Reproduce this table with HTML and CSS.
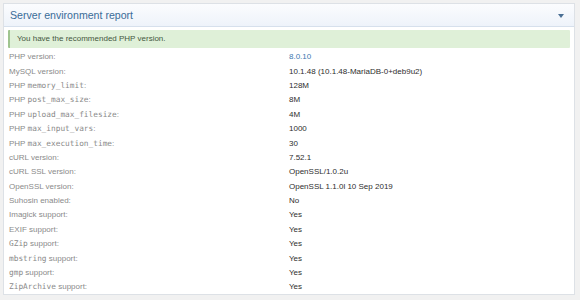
FILE: index.html
```html
<!DOCTYPE html>
<html>
<head>
<meta charset="utf-8">
<link rel="stylesheet" href="styles.css">
</head>
<body>
<div class="panel">
  <div class="panel-head">
    <h2 class="panel-title">Server environment report</h2>
    <span class="caret"></span>
  </div>
  <div class="panel-body">
    <div class="alert">You have the recommended PHP version.</div>
    <dl class="report">
      <dt>PHP version:</dt><dd><a class="link">8.0.10</a></dd>
      <dt>MySQL version:</dt><dd>10.1.48 (10.1.48-MariaDB-0+deb9u2)</dd>
      <dt>PHP <code>memory_limit</code>:</dt><dd>128M</dd>
      <dt>PHP <code>post_max_size</code>:</dt><dd>8M</dd>
      <dt>PHP <code>upload_max_filesize</code>:</dt><dd>4M</dd>
      <dt>PHP <code>max_input_vars</code>:</dt><dd>1000</dd>
      <dt>PHP <code>max_execution_time</code>:</dt><dd>30</dd>
      <dt>cURL version:</dt><dd>7.52.1</dd>
      <dt>cURL SSL version:</dt><dd>OpenSSL/1.0.2u</dd>
      <dt>OpenSSL version:</dt><dd>OpenSSL 1.1.0l 10 Sep 2019</dd>
      <dt>Suhosin enabled:</dt><dd>No</dd>
      <dt>Imagick support:</dt><dd>Yes</dd>
      <dt>EXIF support:</dt><dd>Yes</dd>
      <dt><code>GZip</code> support:</dt><dd>Yes</dd>
      <dt><code>mbstring</code> support:</dt><dd>Yes</dd>
      <dt><code>gmp</code> support:</dt><dd>Yes</dd>
      <dt><code>ZipArchive</code> support:</dt><dd>Yes</dd>
    </dl>
  </div>
</div>
</body>
</html>
```
FILE: styles.css
```css
html, body {
  margin: 0;
  padding: 0;
}
body {
  background: #f1f1f1;
  font-family: "Liberation Sans", Arial, sans-serif;
  padding: 3px 5px 0 3px;
  height: 300px;
  box-sizing: border-box;
}
.panel {
  background: #fff;
  border: 1px solid #dde1e6;
  height: 292px;
  box-sizing: border-box;
}
.panel-head {
  height: 22px;
  display: flex;
  align-items: center;
  justify-content: space-between;
  padding: 0 10px 0 6px;
  background: linear-gradient(#fbfcfe, #eef3fa);
  border-bottom: 1px solid #d6e0ec;
}
.panel-title {
  margin: 0;
  font-weight: normal;
  font-size: 10.6px;
  color: #3a6c98;
}
.caret {
  width: 0;
  height: 0;
  border-left: 3.5px solid transparent;
  border-right: 3.5px solid transparent;
  border-top: 4px solid #4a6f94;
  margin-top: 1px;
}
.panel-body {
  padding: 3px 4px 0 4px;
}
.alert {
  background: #dff0d8;
  border-left: 2px solid #9fc48f;
  border-radius: 1px;
  height: 18px;
  line-height: 18px;
  padding-left: 7px;
  font-size: 8px;
  color: #44573f;
}
.report {
  margin: 2px 0 0 0;
  display: grid;
  grid-template-columns: 281px 1fr;
  grid-auto-rows: 14.4px;
  align-items: center;
  font-size: 8px;
  line-height: 10px;
}
.report dt {
  color: #8a8a8a;
  padding-left: 1px;
}
.report dd {
  margin: 0;
  color: #2e2e2e;
}
.report code {
  font-family: "DejaVu Sans Mono", monospace;
  font-size: 7.8px;
  line-height: 1;
  color: #8a8a8a;
}
.link {
  color: #3d78b0;
}
```
